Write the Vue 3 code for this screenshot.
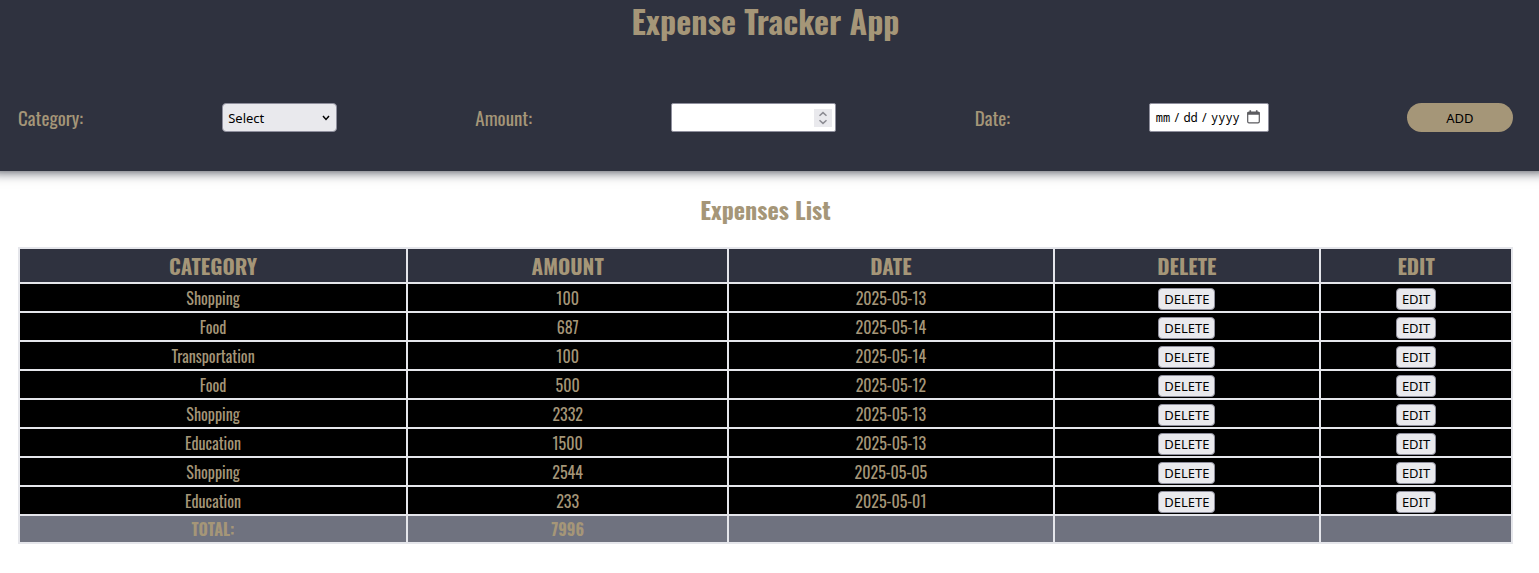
<script setup>
import { ref, computed } from 'vue'

const category = ref('')
const amount = ref('')
const date = ref('')
const expenses = ref([
  { id: 1, category: 'Shopping', amount: 100, date: '2025-05-13' },
  { id: 2, category: 'Food', amount: 687, date: '2025-05-14' },
  { id: 3, category: 'Transportation', amount: 100, date: '2025-05-14' },
  { id: 4, category: 'Food', amount: 500, date: '2025-05-12' },
  { id: 5, category: 'Shopping', amount: 2332, date: '2025-05-13' },
  { id: 6, category: 'Education', amount: 1500, date: '2025-05-13' },
  { id: 7, category: 'Shopping', amount: 2544, date: '2025-05-05' },
  { id: 8, category: 'Education', amount: 233, date: '2025-05-01' },
])
const total = computed(() => expenses.value.reduce((sum, e) => sum + e.amount, 0))

function add() {
  if (!category.value || !amount.value || !date.value) return
  expenses.value.push({ id: Date.now(), category: category.value, amount: Number(amount.value), date: date.value })
}
function remove(id) {
  expenses.value = expenses.value.filter((e) => e.id !== id)
}
function edit(e) {
  category.value = e.category
  amount.value = e.amount
  date.value = e.date
  remove(e.id)
}
</script>

<template>
  <div class="page">
    <header class="top">
      <h1>Expense Tracker App</h1>
      <form class="form" @submit.prevent="add">
        <label class="lb-category" for="category">Category:</label>
        <div class="field field-select">
          <select id="category" v-model="category">
            <option value="">Select</option>
            <option>Food</option>
            <option>Shopping</option>
            <option>Transportation</option>
            <option>Education</option>
          </select>
          <svg class="chevron" viewBox="0 0 8 6" aria-hidden="true"><path d="M1 1l3 3.4L7 1" /></svg>
        </div>
        <label class="lb-amount" for="amount">Amount:</label>
        <div class="field field-amount">
          <input id="amount" v-model="amount" type="number" />
          <svg class="spinner" viewBox="0 0 18 18" aria-hidden="true"><path d="M5.5 6.8L9 3.6l3.5 3.2M5.5 11.2L9 14.4l3.5-3.2" /></svg>
        </div>
        <label class="lb-date" for="date">Date:</label>
        <div class="field field-date">
          <input id="date" v-model="date" type="date" />
          <svg class="calendar" viewBox="0 0 13 14" aria-hidden="true">
            <rect x="0.7" y="2.2" width="11.6" height="10.6" rx="1.3" />
            <path class="solid" d="M0.5 2h12v2.8h-12zM2.5 0.3h1.6v2H2.5zM8.9 0.3h1.6v2H8.9z" />
          </svg>
        </div>
        <button class="add" type="submit">ADD</button>
      </form>
    </header>

    <main class="list">
      <h2>Expenses List</h2>
      <table>
        <colgroup>
          <col class="c-category" /><col class="c-amount" /><col class="c-date" /><col class="c-delete" /><col />
        </colgroup>
        <thead>
          <tr><th>CATEGORY</th><th>AMOUNT</th><th>DATE</th><th>DELETE</th><th>EDIT</th></tr>
        </thead>
        <tbody>
          <tr v-for="e in expenses" :key="e.id">
            <td>{{ e.category }}</td>
            <td>{{ e.amount }}</td>
            <td>{{ e.date }}</td>
            <td><button type="button" @click="remove(e.id)">DELETE</button></td>
            <td><button type="button" @click="edit(e)">EDIT</button></td>
          </tr>
        </tbody>
        <tfoot>
          <tr><td>TOTAL:</td><td>{{ total }}</td><td></td><td></td><td></td></tr>
        </tfoot>
      </table>
    </main>
  </div>
</template>

<style>
body {
  margin: 0;
  background: #fff;
}
</style>

<style scoped>
.page {
  font-family: Oswald, "Liberation Sans Narrow", "DejaVu Sans Condensed", sans-serif;
  color: #a59678;
}
.top {
  background: #2f323f;
  box-shadow: 0 -10px 12px 10px #2f323f;
  padding: 0 26px 39px 18px;
}
h1 {
  margin: 0 0 61px;
  font-size: 32px;
  line-height: 42px;
  font-weight: 700;
  text-align: center;
}
.form {
  display: flex;
  justify-content: space-between;
  align-items: center;
}
label {
  font-size: 19px;
  line-height: 28px;
  padding-bottom: 1px;
  white-space: nowrap;
}
.lb-category { width: 66px; }
.lb-amount { width: 58px; }
.lb-date { width: 36px; }
.field {
  position: relative;
  height: 29px;
}
.field-select { width: 115px; }
.field-amount { width: 165px; }
.field-date { width: 120px; }
select,
input,
button {
  box-sizing: border-box;
  font-family: "Noto Sans", sans-serif;
  font-size: 13px;
  color: #000;
}
select,
input {
  appearance: none;
  display: block;
  width: 100%;
  height: 29px;
  margin: 0;
  padding: 0 5px;
  border: 1px solid #8f8f9d;
  border-radius: 2px;
  background: #fff;
}
select {
  border-radius: 4px;
  background: #e9e9ed;
}
#date {
  font-family: "Noto Sans Mono", "DejaVu Sans Mono", monospace;
  font-size: 12px;
}
svg {
  position: absolute;
  fill: none;
  pointer-events: none;
}
.chevron {
  right: 7px;
  top: 12px;
  width: 8px;
  height: 6px;
  stroke: #000;
  stroke-width: 1.5;
}
.spinner {
  right: 4px;
  top: 6px;
  width: 18px;
  height: 18px;
  background: #e9e9ed;
  stroke: #8b8b92;
  stroke-width: 1.5;
}
.calendar {
  right: 9px;
  top: 7px;
  width: 13px;
  height: 14px;
  stroke: #5b5b5f;
  stroke-width: 1.2;
}
.calendar .solid {
  fill: #5b5b5f;
  stroke: none;
}
#amount::-webkit-inner-spin-button {
  opacity: 0;
}
#date::-webkit-calendar-picker-indicator {
  opacity: 0;
  width: 13px;
  margin: 0;
  padding: 0;
}
#date::-webkit-datetime-edit-text {
  padding: 0 2px;
}
.add {
  width: 106px;
  height: 29px;
  padding: 0;
  border: 0;
  border-radius: 15px;
  background: #a59678;
}
.list {
  padding: 18px 26px 29px 18px;
}
h2 {
  margin: 0 0 18px;
  font-size: 24px;
  line-height: 40px;
  font-weight: 700;
  text-align: center;
}
table {
  width: 100%;
  table-layout: fixed;
  border-collapse: collapse;
  text-align: center;
}
.c-category { width: 26%; }
.c-amount { width: 21.5%; }
.c-date { width: 21.8%; }
.c-delete { width: 17.85%; }
th,
td {
  padding: 0;
  border: 2px solid #e5e6eb;
}
th {
  height: 33px;
  background: #2f323f;
  font-size: 21px;
  line-height: 33px;
}
td {
  padding-top: 2px;
  height: 25px;
  background: #000;
  font-size: 16px;
  line-height: 25px;
}
td button {
  display: block;
  height: 22px;
  margin: 0 auto;
  padding: 0 5px;
  border: 1px solid #8f8f9d;
  border-radius: 4px;
  background: #e9e9ed;
  line-height: 18px;
}
tfoot td {
  padding: 0;
  height: 26px;
  background: #6f727f;
  font-weight: 700;
  line-height: 26px;
}
</style>
